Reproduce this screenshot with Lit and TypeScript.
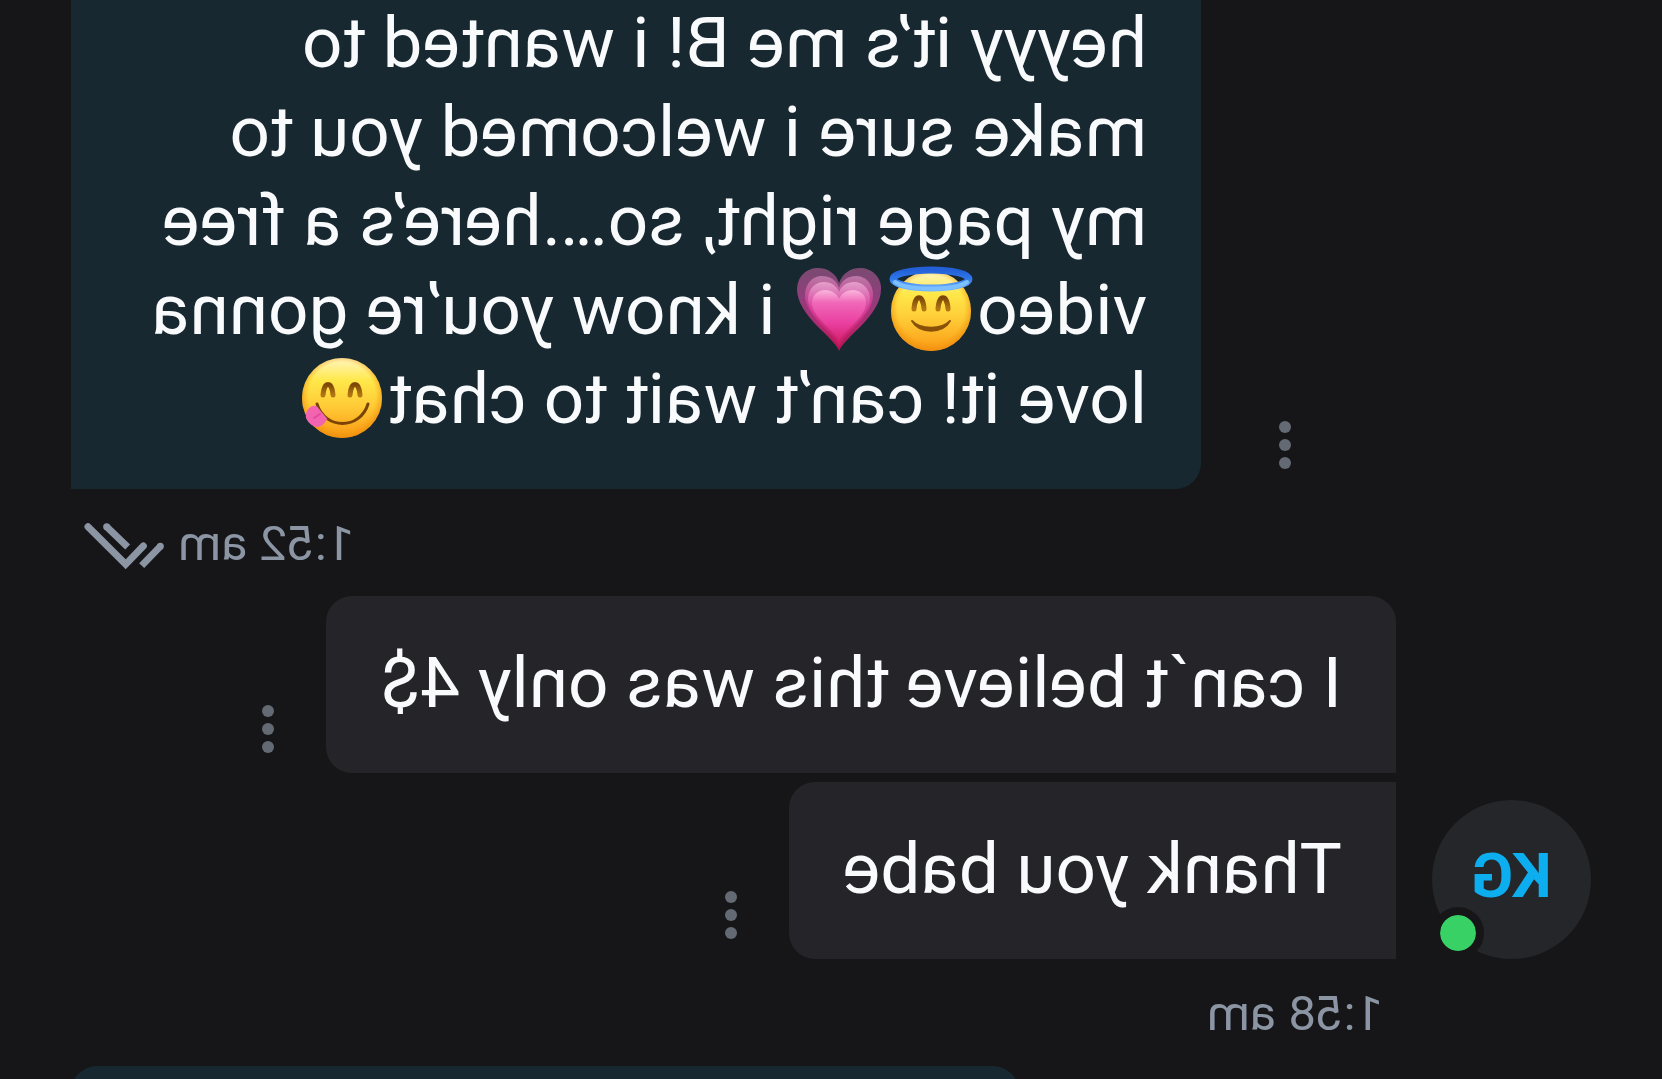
import { LitElement, html, css, nothing, type TemplateResult } from "lit";
import { customElement, property } from "lit/decorators.js";

type Emoji = "halo" | "heart" | "yum";
type Piece = string | { emoji: Emoji };

interface Message {
  from: "me" | "them";
  lines: Piece[][];
  shape: "continued" | "first" | "last" | "upcoming";
}

const SENT: Message = {
  from: "me",
  shape: "continued",
  lines: [
    ["heyyy it’s me B! i wanted to"],
    ["make sure i welcomed you to"],
    ["my page right, so….here’s a free"],
    ["video", { emoji: "halo" }, { emoji: "heart" }, " i know you’re gonna"],
    ["love it! can’t wait to chat", { emoji: "yum" }],
  ],
};

const RECEIVED: Message[] = [
  { from: "them", shape: "first", lines: [["I can´t believe this was only 4$"]] },
  { from: "them", shape: "last", lines: [["Thank you babe"]] },
];

const UPCOMING: Message = { from: "me", shape: "upcoming", lines: [] };

@customElement("chat-emoji")
class ChatEmoji extends LitElement {
  @property() name: Emoji = "halo";

  static styles = css`
    :host {
      display: inline-block;
      width: 92px;
      height: 88px;
      padding-top: 1px;
      vertical-align: top;
    }
    svg {
      display: block;
      width: 92px;
      height: 88px;
    }
  `;

  render(): TemplateResult {
    if (this.name === "heart") {
      return html`<svg viewBox="0 0 92 88" role="img" aria-label="growing heart">
        <defs>
          <linearGradient id="h1" x1="0" y1="0" x2="0" y2="1">
            <stop offset="0" stop-color="#7a4a70" />
            <stop offset=".35" stop-color="#8f3f7c" />
            <stop offset=".7" stop-color="#b02a72" />
            <stop offset="1" stop-color="#b5134f" />
          </linearGradient>
          <linearGradient id="h2" x1="0" y1="0" x2="0" y2="1">
            <stop offset="0" stop-color="#b878a4" />
            <stop offset=".4" stop-color="#c93a92" />
            <stop offset="1" stop-color="#c8175f" />
          </linearGradient>
          <linearGradient id="h4" x1="0" y1="0" x2="0" y2="1">
            <stop offset="0" stop-color="#e3a0cb" />
            <stop offset=".4" stop-color="#d8479f" />
            <stop offset="1" stop-color="#cc1c66" />
          </linearGradient>
          <linearGradient id="h3" x1="0" y1="0" x2="0" y2="1">
            <stop offset="0" stop-color="#f9b5dd" />
            <stop offset=".25" stop-color="#f068b8" />
            <stop offset=".65" stop-color="#ea3fa0" />
            <stop offset="1" stop-color="#d5226f" />
          </linearGradient>
        </defs>
        <path fill="url(#h1)" d="M46 85C41 71 4 50 4 23C4 10 14 2 25 2C35 2 43 8 46 17C49 8 57 2 67 2C78 2 88 10 88 23C88 50 51 71 46 85Z" />
        <path fill="url(#h2)" d="M46 81C41 68 12 50 12 29C12 18 19 10 29 10C38 10 44 15 46 22C48 15 54 10 63 10C73 10 80 18 80 29C80 50 51 68 46 81Z" />
        <path fill="url(#h4)" d="M46 78C41 66 15 50 15 33C15 23 22 16 31 16C38 16 44 20 46 26C48 20 54 16 61 16C70 16 77 23 77 33C77 50 51 66 46 78Z" />
        <path fill="url(#h3)" d="M46 75C41 64 19 51 19 37C19 29 25 24 32 24C39 24 44 28 46 33C48 28 53 24 60 24C67 24 73 29 73 37C73 51 51 64 46 75Z" />
      </svg>`;
    }
    const halo = this.name === "halo";
    const top = halo ? 0 : 2;
    return html`<svg viewBox="0 ${top} 92 88" role="img" aria-label=${halo ? "smiling face with halo" : "face savoring food"}>
      <defs>
        <linearGradient id="f" x1="0" y1="0" x2="0" y2="1">
          <stop offset="0" stop-color="#fff6c0" />
          <stop offset=".28" stop-color="#ffe84a" />
          <stop offset=".6" stop-color="#ffcb36" />
          <stop offset="1" stop-color="#fa9a14" />
        </linearGradient>
        <radialGradient id="r" cx=".5" cy=".47" r=".53">
          <stop offset=".78" stop-color="#f59a12" stop-opacity="0" />
          <stop offset="1" stop-color="#ee8a0c" stop-opacity=".75" />
        </radialGradient>
        <linearGradient id="b" x1="0" y1="0" x2="0" y2="1">
          <stop offset="0" stop-color="#2360d8" />
          <stop offset=".5" stop-color="#2f78ea" />
          <stop offset="1" stop-color="#6db4ff" />
        </linearGradient>
        <linearGradient id="e" x1="0" y1="0" x2="0" y2="1">
          <stop offset="0" stop-color="#7d4706" />
          <stop offset="1" stop-color="#b27712" />
        </linearGradient>
      </defs>
      <circle cx="46" cy="45" r="40" fill="url(#f)" />
      <circle cx="46" cy="45" r="40" fill="url(#r)" />
      <g display=${halo ? "inline" : "none"}>
        <path fill="none" stroke="url(#e)" stroke-width="5" stroke-linecap="round" d="M29 43C30 28 38 28 39 43M53 43C54 28 62 28 63 43" />
        <path fill="#8a5208" stroke="#8a5208" stroke-width="2" stroke-linejoin="round" d="M27 55C35 68 57 68 65 55C57 64 35 64 27 55Z" />
        <ellipse cx="46" cy="13" rx="38" ry="9" fill="none" stroke="url(#b)" stroke-width="7" />
        <path d="M10 16C24 25 68 25 82 16" fill="none" stroke="#7cc0ff" stroke-width="4" stroke-linecap="round" />
      </g>
      <g display=${halo ? "none" : "inline"}>
        <path fill="none" stroke="url(#e)" stroke-width="5" stroke-linecap="round" d="M28 42C29 28 37 28 38 42M55 42C56 28 64 28 65 42" />
        <path fill="none" stroke="#7a4406" stroke-width="3" stroke-linecap="round" d="M20 51C28 77 63 77 71 51" />
        <path fill="#f364b0" stroke="#f364b0" stroke-width="2" stroke-linejoin="round" d="M62 66L72 54C78 53 82 59 81 65C79 70 74 73 70 73C66 72 64 70 62 66Z" />
        <path fill="none" stroke="#e04c9a" stroke-width="2" stroke-linecap="round" d="M68 61L74 65" />
      </g>
    </svg>`;
  }
}

@customElement("chat-message")
class ChatMessage extends LitElement {
  @property({ attribute: false }) message!: Message;

  static styles = css`
    :host {
      display: block;
    }
    .row {
      display: flex;
      align-items: flex-end;
    }
    .row.me {
      flex-direction: row-reverse;
      gap: 64px;
    }
    .row.them {
      gap: 38px;
    }
    .bubble {
      box-sizing: border-box;
      margin: 0;
      padding: 42px 54px 46px;
      border-radius: 26px;
      color: #f9fafc;
      font-size: 71px;
      line-height: 89px;
    }
    .me .bubble {
      background: #172831;
    }
    .them .bubble {
      background: #252429;
    }
    .bubble.continued {
      width: 1130px;
      margin-top: -2px;
      padding-top: 0;
      border-radius: 0 0 0 26px;
    }
    .bubble.first {
      border-bottom-left-radius: 0;
    }
    .bubble.last {
      border-top-left-radius: 0;
      border-bottom-left-radius: 0;
    }
    .bubble.upcoming {
      width: 948px;
      min-height: 177px;
    }
    .line {
      display: block;
      height: 89px;
      white-space: pre;
    }
    .more {
      display: block;
      margin: 0;
      padding: 20px 12px;
      border: 0;
      background: none;
      cursor: pointer;
    }
    .more svg {
      display: block;
      width: 16px;
      height: 48px;
      fill: #636a74;
    }
  `;

  render() {
    const { from, shape, lines } = this.message;
    return html`<div class="row ${from}">
      <p class="bubble ${shape}">${lines.map(
        (line) =>
          html`<span class="line">${line.map((p) =>
            typeof p === "string" ? p : html`<chat-emoji .name=${p.emoji}></chat-emoji>`
          )}</span>`
      )}</p>
      ${shape === "upcoming"
        ? nothing
        : html`<button class="more" type="button" aria-label="Message options">
            <svg viewBox="0 0 16 48"><circle cx="8" cy="6" r="6" /><circle cx="8" cy="24" r="6" /><circle cx="8" cy="42" r="6" /></svg>
          </button>`}
    </div>`;
  }
}

@customElement("app-root")
class AppRoot extends LitElement {
  static styles = css`
    :host {
      display: block;
      height: 100vh;
      overflow: hidden;
      background: #161618;
      font-family: Roboto, "Liberation Sans", sans-serif;
    }
    /* The whole conversation is shown as a mirror image. */
    .thread {
      display: flex;
      flex-direction: column;
      padding: 0 71px;
      transform: scaleX(-1);
    }
    .meta {
      display: flex;
      align-items: center;
      gap: 14px;
      box-sizing: border-box;
      height: 107px;
      padding: 2px 13px 0;
      color: #8b95a3;
      font-size: 49px;
      line-height: 56px;
    }
    .meta.sent {
      justify-content: flex-end;
    }
    .meta.received {
      padding-left: 208px;
    }
    .ticks {
      width: 80px;
      height: 47px;
      margin-top: 6px;
    }
    .group {
      display: flex;
      align-items: flex-end;
      gap: 36px;
    }
    .stack {
      display: flex;
      flex-direction: column;
      gap: 9px;
    }
    .avatar {
      position: relative;
      display: grid;
      place-items: center;
      flex: none;
      width: 159px;
      height: 159px;
      border-radius: 50%;
      background: #25262a;
      color: #0caeef;
      font-size: 62px;
      font-weight: 700;
      line-height: 64px;
    }
    .initials {
      padding-bottom: 8px;
    }
    .online {
      position: absolute;
      right: 0;
      bottom: 0;
      width: 36px;
      height: 36px;
      border: 8px solid #161618;
      border-radius: 50%;
      background: #38d165;
      background-clip: padding-box;
    }
  `;

  render() {
    return html`<main class="thread">
      <chat-message .message=${SENT}></chat-message>
      <div class="meta sent">
        <time>1:52 am</time>
        <svg class="ticks" viewBox="0 0 240 141" fill="none" stroke="#8b95a3" stroke-width="21" role="img" aria-label="Read">
          <path stroke-linecap="round" d="M228 11L115 124L62 69" />
          <path d="M172 11L109 72M67 128L11 70" />
          <g fill="#8b95a3" stroke="none"><circle cx="172" cy="11" r="10.5" /><circle cx="11" cy="70" r="10.5" /></g>
        </svg>
      </div>
      <section class="group">
        <div class="avatar"><span class="initials">KG</span><span class="online"></span></div>
        <div class="stack">${RECEIVED.map((m) => html`<chat-message .message=${m}></chat-message>`)}</div>
      </section>
      <div class="meta received"><time>1:58 am</time></div>
      <chat-message .message=${UPCOMING}></chat-message>
    </main>`;
  }
}
